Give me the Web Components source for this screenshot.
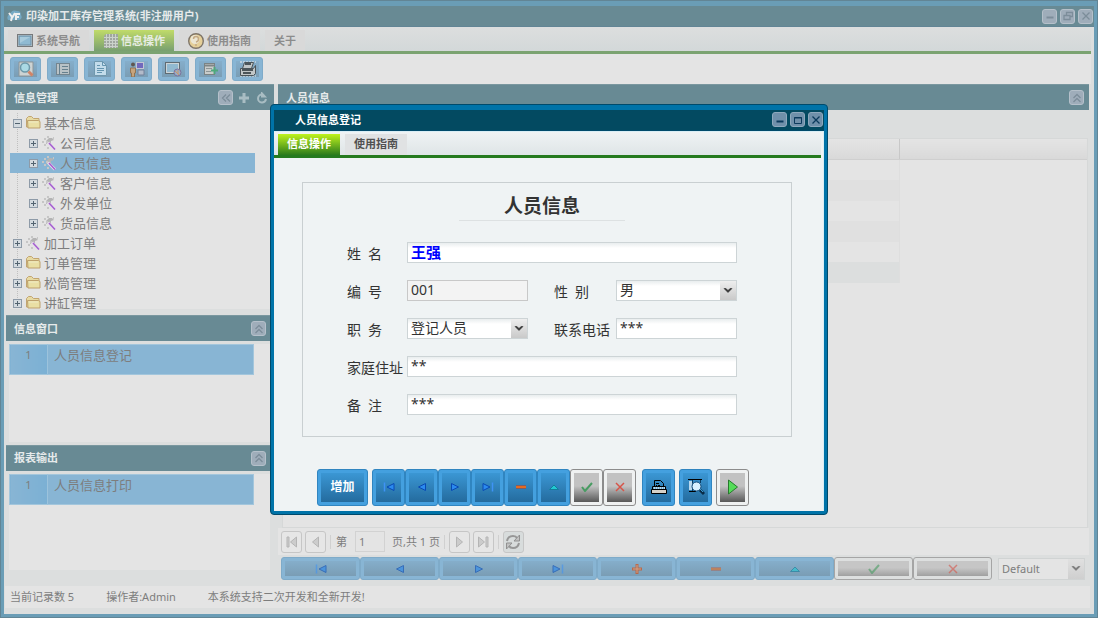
<!DOCTYPE html>
<html lang="zh-CN">
<head>
<meta charset="utf-8">
<title>印染加工库存管理系统</title>
<style>
  html, body { margin: 0; min-height: 100vh; }
  body {
    display: flex;
    background: #688b9a;
    color: #7d7d7d;
    font: 11px/16px "Noto Sans", "Noto Sans CJK SC", sans-serif;
  }
  stock-app { flex: 1; }
</style>
</head>
<body>
<stock-app></stock-app>

<script>
const ICONS = {
  logo: [16, 16, '<path d="M1 12q-2-4 2-6 2-5 7-3 4 0 4 4 2 4-2 5z" fill="#76a9c4"/><path d="M2 5l3 4-1 4M8 5l-3 5M9 12V6h4M9 9h3" stroke="#eee" stroke-width="2" fill="none"/>'],
  screen: [16, 14, '<rect x=".5" y=".5" width="15" height="12" fill="#c3cdd2" stroke="#77797b"/><rect x="2" y="2" width="12" height="9" fill="#8fbad2" stroke="#6c8fa5"/><path d="M3 3h10L3 9z" fill="#a9cbdc"/>'],
  sheet: [15, 16, '<path d="M3 1h12v14H1V3z" fill="#a0a6a0"/><path d="M1 4.500h14M1 7.500h14M1 10.500h14M1 13.500h14M3.500 1v14M6.500 1v14M9.500 1v14M12.500 1v14" stroke="#cbd2cb"/>'],
  help: [16, 16, '<circle cx="8" cy="8" r="7.300" fill="#e5cf98" stroke="#7f7568" stroke-width="1.400"/><circle cx="7" cy="6.500" r="4.500" fill="#ece6d3"/><path d="M5.500 6q0-2.500 2.500-2.500T10.500 6 8 9M8 11v2" stroke="#c5aa84" stroke-width="1.500" fill="none"/>'],
  find: [16, 16, '<path d="M1 1h14v14H1z" fill="#cdd3d3" stroke="#8c9598"/><circle cx="7" cy="6.500" r="4.500" fill="#aad9e4" stroke="#6d98a9" stroke-width="1.500"/><path d="M10.500 10.500l4 4" stroke="#d08468" stroke-width="3"/>'],
  list: [16, 16, '<rect x="1.500" y="2.500" width="13" height="11" fill="#b9c2c6" stroke="#74858f"/><path d="M4.500 3v11M7 5.500h6M7 8.500h6M7 11.500h6" stroke="#66808e"/>'],
  doc: [16, 16, '<path d="M2.500.5h8l4 4v10h-12z" fill="#c3dceb" stroke="#7098ae"/><path d="M10.500.5v4h4M5 4.500h3M5 7.500h7M5 9.500h7M5 11.500h5" fill="none" stroke="#6595b0"/>'],
  users: [16, 16, '<circle cx="4" cy="3.500" r="2" fill="#5f564f"/><path d="M1.500 7h5v5h-1v4h-3v-4h-1z" fill="#c7a47c" stroke="#907454"/><rect x="7.500" y="1.500" width="7" height="6" fill="#7169bd" stroke="#c3c6d2"/><path d="M9 9h6v5H9z" fill="#b3bbca" stroke="#72819a"/>'],
  globe: [17, 16, '<rect x=".5" y="1.500" width="14" height="11" fill="#cbd4d8" stroke="#5f6b72"/><rect x="2" y="3" width="11" height="8" fill="#91b9d0"/><circle cx="12.500" cy="11.500" r="3.500" fill="#95acc7" stroke="#7c729b"/><path d="M10 10l4 4M13 9v4" stroke="#cb9768"/>'],
  add: [16, 16, '<rect x="1.500" y="2.500" width="10" height="11" fill="#c9cccb" stroke="#7b8384"/><path d="M2 4.500h9" stroke="#7e8686" stroke-width="2"/><path d="M3 7.500h6M3 10.500h5" stroke="#8e9696"/><path d="M8 9.500h7M11.500 6v7" stroke="#4fa87c" stroke-width="2"/>'],
  print: [18, 16, '<path d="M1 1h16M1 15h16" stroke="#eee" stroke-dasharray="2 1"/><path d="M5.500 1.500h9l-2 6h-9zM1.500 7.500h13l2-3v8l-2 2h-13z" fill="#c1c6c7" stroke="#4c5559"/><path d="M3 9h11M4 12h8M6 3h6" stroke="#4c5559" stroke-width="2"/>'],
  folder: [16, 14, '<path d="M1.500 11V2.500l2-2h3l2 2h5.500V11z" fill="#e7daa3" stroke="#c2a570"/><path d="M2.500 4.500h11l1.500 1V12H3z" fill="#e9dfa4" stroke="#bda06c"/><path d="M4 6h9" stroke="#efeac6"/>'],
  wand: [16, 15, '<path d="M5 5l3-3h3l2 2-3 1v3l-3-1-2 1z" fill="#b4b4b4"/><path d="M1 6h2M3 9h2M6 12h2M3 3h2M6 1h2M12 2h1M5 6h2" stroke="#c6c6c6" stroke-width="2"/><path d="M7 6.500l7 7" stroke="#e6dcea" stroke-width="3"/><path d="M8 7l6 6.500" stroke="#a45fd0" stroke-width="1.500"/>'],
  minus: [9, 9, '<rect x=".5" y=".5" width="8" height="8" fill="#d4dbe0" stroke="#8e9ba8"/><path d="M2 4.500h5" stroke="#526370"/>'],
  plusbox: [9, 9, '<rect x=".5" y=".5" width="8" height="8" fill="#d4dbe0" stroke="#8e9ba8"/><path d="M2 4.500h5M4.500 2v5" stroke="#526370"/>'],
  up2: [10, 10, '<path d="M1.500 5L5 1.500 8.500 5M1.500 9L5 5.500 8.500 9" fill="none" stroke="currentColor" stroke-width="1.300"/>'],
  left2: [10, 10, '<path d="M5 1.500L1.500 5 5 8.500M9 1.500L5.500 5 9 8.500" fill="none" stroke="currentColor" stroke-width="1.300"/>'],
  cross: [10, 10, '<path d="M1.500 1.500l7 7M8.500 1.500l-7 7" stroke="currentColor" stroke-width="1.300"/>'],
  min: [10, 10, '<path d="M1.500 6.500h7" stroke="currentColor" stroke-width="2"/>'],
  max: [10, 10, '<path d="M1.500 2.500h7v6h-7zM1 3h8" fill="none" stroke="currentColor"/>'],
  restore: [10, 10, '<path d="M3.500 4V1.500h6v4H7M1 4.500h6v4H1z" fill="none" stroke="currentColor" stroke-width="1.300"/>'],
  plus: [12, 12, '<path d="M6 1v10M1 6h10" stroke="currentColor" stroke-width="3"/>'],
  reload: [12, 12, '<path d="M10 7a4 4 0 1 1-4-4.500" fill="none" stroke="currentColor" stroke-width="2"/><path d="M5 5.500V0h1l5 5.500z" fill="currentColor"/>'],
  first: [12, 10, '<path d="M1.500.5v9" stroke="#3f93f5" stroke-width="1.500"/><path d="M11 1.500v7L4 5z" fill="#2b8aef" stroke="#0849b3"/>'],
  prev: [10, 10, '<path d="M8.500 1.500v7L1.500 5z" fill="#2b8aef" stroke="#0849b3"/>'],
  next: [10, 10, '<path d="M1.500 1.500v7l7-3.500z" fill="#2b8aef" stroke="#0849b3"/>'],
  last: [12, 10, '<path d="M10.500.5v9" stroke="#3f93f5" stroke-width="1.500"/><path d="M1 1.500v7l7-3.500z" fill="#2b8aef" stroke="#0849b3"/>'],
  ins: [10, 10, '<path d="M5 0v10M0 5h10" stroke="#e04200" stroke-width="3"/><path d="M5 1v8M1 5h8" stroke="#ffa36b"/>'],
  del: [10, 10, '<path d="M0 5h10" stroke="#c93a10" stroke-width="3"/><path d="M0 5h10" stroke="#ff9b31"/>'],
  edit: [10, 10, '<path d="M.5 7.500h9L5 3z" fill="#22c9d2" stroke="#127d9a"/>'],
  ok: [12, 10, '<path d="M1 5l3 4 7-8" fill="none" stroke="#489c62" stroke-width="2"/>'],
  no: [10, 10, '<path d="M1 1l8 8M9 1L1 9" stroke="#d65448" stroke-width="1.500"/>'],
  printer: [16, 16, '<path d="M3.500 7V1.500h6l3 3V7" fill="none" stroke="#000"/><path d="M5 4.500h3M5 6.500h1M7 6.500h2" stroke="#000"/><path d="M1.500 7.500h13v3h-13z" fill="#b7daee" stroke="#000"/><path d="M2 9h12" stroke="#2c78ad" stroke-dasharray="1 1"/><path d="M.5 10.500h15v4H.5z" fill="#d7d1c8" stroke="#000"/>'],
  preview: [18, 18, '<path d="M1 1.500h14M2 13.500h7" stroke="#000"/><path d="M2 3h3v9H2z" fill="#b9d9ee"/><path d="M5.500 2v11M13.500 2v3" stroke="#083c61"/><circle cx="9.500" cy="8.500" r="4.500" fill="#d8f1ff" stroke="#134c7a"/><path d="M13 12l4 4" stroke="#0a2b47" stroke-width="3"/><path d="M13 11l3 3" stroke="#3b9bd2"/>'],
  play: [12, 16, '<path d="M1.500 1v14L10.500 8z" fill="#54dc58" stroke="#267a2c"/>'],
  gfirst: [12, 12, '<path d="M1 1h2v10H1zM10.500 1v10L4.500 6z" fill="#ccc" stroke="#b5b5b5"/>'],
  gprev: [10, 12, '<path d="M7.500 1v10l-6-5z" fill="#ccc" stroke="#b5b5b5"/>'],
  gnext: [10, 12, '<path d="M2.500 1v10l6-5z" fill="#ccc" stroke="#b5b5b5"/>'],
  glast: [12, 12, '<path d="M9 1h2v10H9zM1.500 1v10l6-5z" fill="#ccc" stroke="#b5b5b5"/>'],
  cycle: [16, 16, '<path d="M2 7q1-5 6-5 3 0 4 2M14 9q-1 5-6 5-3 0-4-2" fill="none" stroke="#979797" stroke-width="2"/><path d="M14.500 1v6H9zM1.500 15V9H7z" fill="#c2c2c2" stroke="#919191"/>'],
  arrow: [10, 7, '<path d="M1 1.500h2l2 2 2-2h2L5 5.500z" fill="currentColor" stroke="currentColor" stroke-width=".6"/>']
};

function define(name, html, setup) {
  const template = document.createElement('template');
  template.innerHTML = html;
  customElements.define(name, class extends HTMLElement {
    constructor() {
      super();
      this.attachShadow({ mode: 'open' }).append(template.content.cloneNode(true));
    }
    connectedCallback() { if (setup) setup(this, this.shadowRoot); }
  });
}

define('ui-icon', `<style>:host{display:inline-flex;flex:none} svg{display:block}</style><span></span>`, (el, root) => {
  const [w, h, body] = ICONS[el.getAttribute('name')];
  root.querySelector('span').innerHTML =
    `<svg width="${w}" height="${h}" viewBox="0 0 ${w} ${h}" aria-hidden="true">${body}</svg>`;
});

/* Small square tool in a title bar */
define('ui-tool', `<style>
  :host{display:block}
  button{display:flex;align-items:center;justify-content:center;width:15px;height:15px;padding:0;box-sizing:border-box;
    border:1px solid var(--tool-edge);border-radius:3px;background:var(--tool);color:var(--tool-ink)}
  :host([plain]) button{border:0;background:none;color:#a9bdc3}
</style><button type="button"><slot></slot></button>`, (el, root) => {
  root.querySelector('button').setAttribute('aria-label', el.getAttribute('label') || '');
});

/* Glossy button with a raised frame */
define('ui-button', `<style>
  :host{display:flex}
  button{flex:1;display:flex;min-width:0;padding:3px;border:1px solid var(--btn-edge);border-radius:3px;
    background:var(--btn);font:bold 12px/16px "Noto Sans","Noto Sans CJK SC",sans-serif;color:#fff}
  span{flex:1;display:flex;align-items:center;justify-content:center;align-self:stretch;
    background:linear-gradient(var(--btn-top),var(--btn-low))}
  slot{display:contents}
  :host([off]) button{border-color:var(--off-edge);background:var(--off)}
  :host([off]) span{background:linear-gradient(var(--off-top) 45%,var(--off-low))}
  :host([faded]) ::slotted(ui-icon){opacity:.6}
</style><button type="button"><span><slot></slot></span></button>`, (el, root) => {
  if (el.hasAttribute('label')) root.querySelector('button').setAttribute('aria-label', el.getAttribute('label'));
});

define('ui-tab', `<style>
  :host{display:block}
  button{display:flex;align-items:center;gap:3px;height:21px;padding:0 9px;border:0;
    background:var(--tab);color:var(--tab-ink);font:bold 11px/22px "Noto Sans","Noto Sans CJK SC",sans-serif}
  :host([active]) button{background:linear-gradient(var(--act-top),var(--act-low));color:var(--act-ink)}
</style><button type="button" role="tab"><slot name="icon"></slot><slot></slot></button>`);

define('ui-window', `<style>
  :host{display:flex;flex-direction:column;box-sizing:border-box;border:1px solid var(--edge);padding:0 3px 3px;
    background:var(--frame)}
  header{display:flex;align-items:center;gap:3px;height:20px;margin:5px 0 0;padding:0 1px 0 var(--title-pad);
    background:var(--bar);border-bottom:1px solid var(--edge);color:var(--title);font-weight:bold}
  .title{flex:1;display:flex;align-items:center;gap:3px}
  nav{display:flex;align-items:flex-end;gap:5px;height:23px;padding-left:4px;margin-right:2px;
    border-bottom:3px solid var(--line);background:linear-gradient(var(--strip-a),var(--strip-b))}
  main{flex:1;display:flex;flex-direction:column;background:var(--body);border:1px solid var(--frame-lite);border-width:1px 1px 0 0}
  section{flex:1;display:flex;flex-direction:column;min-height:0;padding-left:1px}
</style>
<header><div class="title"><slot name="title"></slot></div><slot name="tools"></slot></header>
<main><nav role="tablist"><slot name="tabs"></slot></nav><section><slot></slot></section></main>`);

define('ui-panel', `<style>
  :host{display:flex;flex-direction:column;min-height:0}
  header{display:flex;align-items:center;gap:3px;height:26px;flex:none;box-sizing:border-box;padding:0 var(--tools-pad,5px) 0 8px;
    background:#688a94;color:#e6eaeb;font-weight:bold;border-top:1px solid #7a979f}
  .t{flex:1}
  .b{flex:1;display:flex;flex-direction:column;min-height:0;overflow:hidden}
</style>
<header><span class="t"></span><slot name="tools"></slot></header><div class="b"><slot></slot></div>`, (el, root) => {
  root.querySelector('.t').textContent = el.getAttribute('heading');
});

define('module-tree', `<style>
  :host{display:block;flex:1 1 0;min-height:0;overflow:hidden;margin:0 4px 6px;padding-top:3px;background:#e4e4e4;
    font-size:13px;line-height:20px}
  ul{list-style:none;margin:0;padding:0}
  li>div{display:flex;align-items:center;gap:3px;height:20px;padding-left:3px;margin-right:15px}
  li li>div{padding-left:19px}
  li{background:repeating-linear-gradient(#c0c0c0 0 1px,#e4e4e4 1px 2px) 7px 0/1px 100% no-repeat}
  li li{background:none}
  .sel{background:#88b5d4}
</style>
<ul>
 <li><div><ui-icon name="minus"></ui-icon><ui-icon name="folder"></ui-icon><span>基本信息</span></div>
  <ul>
   <li><div><ui-icon name="plusbox"></ui-icon><ui-icon name="wand"></ui-icon><span>公司信息</span></div></li>
   <li><div class="sel"><ui-icon name="plusbox"></ui-icon><ui-icon name="wand"></ui-icon><span>人员信息</span></div></li>
   <li><div><ui-icon name="plusbox"></ui-icon><ui-icon name="wand"></ui-icon><span>客户信息</span></div></li>
   <li><div><ui-icon name="plusbox"></ui-icon><ui-icon name="wand"></ui-icon><span>外发单位</span></div></li>
   <li><div><ui-icon name="plusbox"></ui-icon><ui-icon name="wand"></ui-icon><span>货品信息</span></div></li>
  </ul></li>
 <li><div><ui-icon name="plusbox"></ui-icon><ui-icon name="wand"></ui-icon><span>加工订单</span></div></li>
 <li><div><ui-icon name="plusbox"></ui-icon><ui-icon name="folder"></ui-icon><span>订单管理</span></div></li>
 <li><div><ui-icon name="plusbox"></ui-icon><ui-icon name="folder"></ui-icon><span>松筒管理</span></div></li>
 <li><div><ui-icon name="plusbox"></ui-icon><ui-icon name="folder"></ui-icon><span>讲缸管理</span></div></li>
</ul>`);

define('numbered-list', `<style>
  :host{display:block;flex:1;margin:3px 4px 3px 3px;background:#e4e4e4}
  table{width:calc(100% - 16px);border-collapse:collapse;background:#88b5d4;border:1px solid #a3c6dc}
  td{padding:0 6px;height:29px;vertical-align:top;font-size:13px;line-height:20px}
  .n{width:25px;text-align:center;font-size:11px;background:linear-gradient(90deg,#88b5d4,#7bb0d4);border-right:1px solid #9cc3dc}
</style>
<table><tr><td class="n">1</td><td><slot></slot></td></tr></table>`);

define('record-grid', `<style>
  :host{display:block;flex:1;min-height:0;overflow:hidden;margin:28px 1px 0 4px;background:#e4e4e4;border:1px solid #d6d8d8}
  table{width:100%;border-collapse:collapse;table-layout:fixed}
  th{height:20px;padding:0;background:linear-gradient(#e4e4e4,#d9d9d9);border-bottom:1px solid #cfcfcf}
  th:first-child{border-right:1px solid #c8c8c8}
  td{height:20px;padding:0}
  td:first-child{border-right:1px solid #dedede}
  tr:nth-child(even) td{height:21px}
  tr:nth-child(even) td:first-child{background:#e0e0e0}
  tr:last-child td:first-child{background:#dcdede}
  col:last-child{width:188px}
</style>
<table><colgroup><col><col></colgroup><thead><tr><th></th><th></th></tr></thead><tbody></tbody></table>`, (el, root) => {
  root.querySelector('tbody').innerHTML = '<tr><td></td><td></td></tr>'.repeat(6);
});

define('record-pager', `<style>
  :host{display:flex;align-items:center;gap:3px;height:27px;padding-left:3px;background:#e4e4e4}
  button{display:flex;align-items:center;justify-content:center;width:21px;height:22px;padding:0;box-sizing:border-box;
    border:1px solid #c6c6c6;border-radius:3px;background:#e6e6e6}
  .cyc{background:#d8dcdc}
  i{width:1px;height:14px;background:#d0d0d0;margin:0 1px}
  label{display:flex;align-items:center;gap:8px;margin:0 4px 0 1px}
  input{width:30px;height:21px;box-sizing:border-box;padding:0 3px;border:1px solid #d2d2d2;background:#e4e4e4;
    font:11px "Noto Sans",sans-serif;color:#7d7d7d}
</style>
<button type="button" aria-label="首页"><ui-icon name="gfirst"></ui-icon></button>
<button type="button" aria-label="上一页"><ui-icon name="gprev"></ui-icon></button><i></i>
<label><span>第</span><input value="1"></label><span>页,共 1 页</span><i></i>
<button type="button" aria-label="下一页"><ui-icon name="gnext"></ui-icon></button>
<button type="button" aria-label="末页"><ui-icon name="glast"></ui-icon></button><i></i>
<button type="button" class="cyc" aria-label="刷新"><ui-icon name="cycle"></ui-icon></button>`);

define('record-nav', `<style>
  :host{display:flex;align-items:center;margin:2px 4px 6px 3px}
  ui-button{flex:1;height:23px}
  .sel{position:relative;display:flex;width:87px;height:22px;margin-left:6px}
  select{appearance:none;flex:1;border:1px solid #d0d3d3;border-radius:0;background:#e4e4e4;padding:0 3px;color:#7d7d7d;
    font:11px "Noto Sans",sans-serif}
  .sel span{position:absolute;right:1px;top:1px;bottom:1px;width:16px;display:flex;align-items:center;justify-content:center;
    background:linear-gradient(#e0e0e0,#cfcfcf);color:#777;pointer-events:none}
</style>
<ui-button faded label="首条"><ui-icon name="first"></ui-icon></ui-button>
<ui-button faded label="上一条"><ui-icon name="prev"></ui-icon></ui-button>
<ui-button faded label="下一条"><ui-icon name="next"></ui-icon></ui-button>
<ui-button faded label="末条"><ui-icon name="last"></ui-icon></ui-button>
<ui-button faded label="新增"><ui-icon name="ins"></ui-icon></ui-button>
<ui-button faded label="删除"><ui-icon name="del"></ui-icon></ui-button>
<ui-button faded label="编辑"><ui-icon name="edit"></ui-icon></ui-button>
<ui-button faded off label="保存"><ui-icon name="ok"></ui-icon></ui-button>
<ui-button faded off label="取消"><ui-icon name="no"></ui-icon></ui-button>
<div class="sel"><select aria-label="样式"><option>Default</option></select><span><ui-icon name="arrow"></ui-icon></span></div>`);

define('person-form', `<style>
  :host{display:flex;flex-direction:column;color:#333;font-size:14px;line-height:20px}
  form{margin:24px 31px 0 27px;padding:10px 54px 21px 44px;border:1px solid #c9cfd1}
  h1{width:166px;margin:0 auto 21px;text-align:center;border-bottom:1px solid #dde1e2;
    font:bold 19px/27px "Liberation Serif","Noto Sans CJK SC",serif;color:#333}
  .grid{display:grid;grid-template-columns:60px 1fr 88px 1fr;row-gap:17px;align-items:center}
  label{padding-top:3px;line-height:18px;white-space:nowrap}
  .in{padding-left:26px}
  .wide{grid-column:span 3}
  input,select{box-sizing:border-box;width:100%;min-width:0;height:21px;padding:0 3px 2px;border:1px solid #cdd4d6;border-radius:0;
    background:linear-gradient(#e9edee,#fff 5px);color:#333;font:14px/18px "Noto Sans","Noto Sans CJK SC",sans-serif}
  input.name{color:#00f;font-weight:bold;font-size:15px}
  input[readonly]{background:#f3f3f3;border-color:#c8c8c8}
  select{appearance:none}
  .sel{position:relative;display:flex}
  .sel span{position:absolute;right:1px;top:1px;bottom:1px;width:16px;display:flex;align-items:center;justify-content:center;
    background:linear-gradient(#eee,#c9c9c9);pointer-events:none}
  footer{display:flex;gap:4px;margin:32px 0 5px 42px}
  footer ui-button{width:33px;height:37px}
  footer .add{width:51px}
  .set{display:flex;margin-right:2px}
</style>
<form>
 <h1>人员信息</h1>
 <div class="grid">
  <label for="name">姓&ensp;名</label><input class="name wide" id="name" value="王强">
  <label for="code">编&ensp;号</label><input id="code" value="001" readonly>
  <label class="in" for="sex">性&ensp;别</label><div class="sel"><select id="sex"><option>男</option></select><span><ui-icon name="arrow"></ui-icon></span></div>
  <label for="job">职&ensp;务</label><div class="sel"><select id="job"><option>登记人员</option></select><span><ui-icon name="arrow"></ui-icon></span></div>
  <label class="in" for="tel">联系电话</label><input id="tel" value="***">
  <label for="addr">家庭住址</label><input class="wide" id="addr" value="**">
  <label for="memo">备&ensp;注</label><input class="wide" id="memo" value="***">
 </div>
</form>
<footer>
 <ui-button class="add">增加</ui-button>
 <div class="set">
  <ui-button label="首条"><ui-icon name="first"></ui-icon></ui-button>
  <ui-button label="上一条"><ui-icon name="prev"></ui-icon></ui-button>
  <ui-button label="下一条"><ui-icon name="next"></ui-icon></ui-button>
  <ui-button label="末条"><ui-icon name="last"></ui-icon></ui-button>
  <ui-button label="删除"><ui-icon name="del"></ui-icon></ui-button>
  <ui-button label="编辑"><ui-icon name="edit"></ui-icon></ui-button>
  <ui-button off label="保存"><ui-icon name="ok"></ui-icon></ui-button>
  <ui-button off label="取消"><ui-icon name="no"></ui-icon></ui-button>
 </div>
 <ui-button label="打印"><ui-icon name="printer"></ui-icon></ui-button>
 <ui-button label="预览"><ui-icon name="preview"></ui-icon></ui-button>
 <ui-button off label="运行"><ui-icon name="play"></ui-icon></ui-button>
</footer>`);

define('stock-app', `<style>
  :host{display:flex;min-width:0}
  .back{flex:1;min-width:0;
    --edge:#628595;--frame:#6a9db6;--frame-lite:#dcdede;--bar:#688a94;--title:#e6eaeb;--title-pad:3px;
    --tool:#9fadba;--tool-edge:#b5c0ca;--tool-ink:#7c8d9a;
    --strip-a:#dcdede;--strip-b:#d3d8d9;--line:#7ba371;--body:#dcdede;
    --tab:#d9d9d9;--tab-ink:#8c8c8c;--act-top:#c0db69;--act-low:#789f70;--act-ink:#e6ece2;
    --btn:#88b5d4;--btn-edge:#7fabc9;--btn-top:#85aecb;--btn-low:#7a9db4;
    --off:#dddfdf;--off-edge:#a5a5a5;--off-top:#c6c6c6;--off-low:#a0a0a0}
  .bar{display:flex;gap:6px;height:24px;padding:3px 5px;margin-right:2px;background:#e4e4e4}
  .bar ui-button{width:31px}
  .cols{flex:1;display:grid;grid-template-columns:268px 1fr;gap:4px;min-height:0;margin:0 4px 0 1px}
  .side{display:flex;flex-direction:column;min-height:0}
  .tree{flex:231 1 0}.win{flex:129 1 0}.rep{flex:141 1 0}
  .win,.rep{--tools-pad:8px}
  .rep numbered-list{margin-bottom:16px}
  footer{display:flex;gap:32px;height:22px;align-items:center;padding:0 5px;margin:0 3px 6px 0;background:#e4e4e4;line-height:22px}
  .over{position:fixed;inset:0;display:grid;place-items:center}
  .front{width:558px;min-height:410px;border-radius:4px;color:#333;
    --edge:#004a6b;--frame:#0073a8;--frame-lite:#d9eef5;--bar:#034a61;--title:#fff;--title-pad:21px;
    --tool:#7090aa;--tool-edge:#8ea9bd;--tool-ink:#0c3a5c;
    --strip-a:#eff3f4;--strip-b:#dfe5e7;--line:#257a1e;--body:#eff3f4;
    --tab:#e0e2e3;--tab-ink:#505050;--act-top:#bff31d;--act-low:#2a7a1c;--act-ink:#fff;
    --btn:#44a0df;--btn-edge:#3085c0;--btn-top:#3b97d4;--btn-low:#246b9e;
    --off:#eff1f1;--off-edge:#8c8c8c;--off-top:#c2c2c2;--off-low:#585858}
</style>
<ui-window class="back">
 <ui-icon slot="title" name="logo"></ui-icon><span slot="title">印染加工库存管理系统(非注册用户)</span>
 <ui-tool slot="tools" label="最小化"><ui-icon name="min"></ui-icon></ui-tool>
 <ui-tool slot="tools" label="还原"><ui-icon name="restore"></ui-icon></ui-tool>
 <ui-tool slot="tools" label="关闭"><ui-icon name="cross"></ui-icon></ui-tool>
 <ui-tab slot="tabs"><ui-icon slot="icon" name="screen"></ui-icon>系统导航</ui-tab>
 <ui-tab slot="tabs" active><ui-icon slot="icon" name="sheet"></ui-icon>信息操作</ui-tab>
 <ui-tab slot="tabs"><ui-icon slot="icon" name="help"></ui-icon>使用指南</ui-tab>
 <ui-tab slot="tabs">关于</ui-tab>
 <div class="bar">
  <ui-button label="查询"><ui-icon name="find"></ui-icon></ui-button>
  <ui-button label="列表"><ui-icon name="list"></ui-icon></ui-button>
  <ui-button label="文档"><ui-icon name="doc"></ui-icon></ui-button>
  <ui-button label="用户"><ui-icon name="users"></ui-icon></ui-button>
  <ui-button label="网络"><ui-icon name="globe"></ui-icon></ui-button>
  <ui-button label="导入"><ui-icon name="add"></ui-icon></ui-button>
  <ui-button label="打印"><ui-icon name="print"></ui-icon></ui-button>
 </div>
 <div class="cols">
  <div class="side">
   <ui-panel class="tree" heading="信息管理">
    <ui-tool slot="tools" label="收起"><ui-icon name="left2"></ui-icon></ui-tool>
    <ui-tool slot="tools" plain label="展开全部"><ui-icon name="plus"></ui-icon></ui-tool>
    <ui-tool slot="tools" plain label="刷新"><ui-icon name="reload"></ui-icon></ui-tool>
    <module-tree></module-tree>
   </ui-panel>
   <ui-panel class="win" heading="信息窗口">
    <ui-tool slot="tools" label="折叠"><ui-icon name="up2"></ui-icon></ui-tool>
    <numbered-list>人员信息登记</numbered-list>
   </ui-panel>
   <ui-panel class="rep" heading="报表输出">
    <ui-tool slot="tools" label="折叠"><ui-icon name="up2"></ui-icon></ui-tool>
    <numbered-list>人员信息打印</numbered-list>
   </ui-panel>
  </div>
  <ui-panel heading="人员信息">
   <ui-tool slot="tools" label="折叠"><ui-icon name="up2"></ui-icon></ui-tool>
   <record-grid></record-grid>
   <record-pager></record-pager>
   <record-nav></record-nav>
  </ui-panel>
 </div>
 <footer><span>当前记录数 5</span><span>操作者:Admin</span><span>本系统支持二次开发和全新开发!</span></footer>
</ui-window>
<div class="over">
 <ui-window class="front" role="dialog" aria-label="人员信息登记">
  <span slot="title">人员信息登记</span>
  <ui-tool slot="tools" label="最小化"><ui-icon name="min"></ui-icon></ui-tool>
  <ui-tool slot="tools" label="最大化"><ui-icon name="max"></ui-icon></ui-tool>
  <ui-tool slot="tools" label="关闭"><ui-icon name="cross"></ui-icon></ui-tool>
  <ui-tab slot="tabs" active>信息操作</ui-tab>
  <ui-tab slot="tabs">使用指南</ui-tab>
  <person-form></person-form>
 </ui-window>
</div>`);
</script>
</body>
</html>
